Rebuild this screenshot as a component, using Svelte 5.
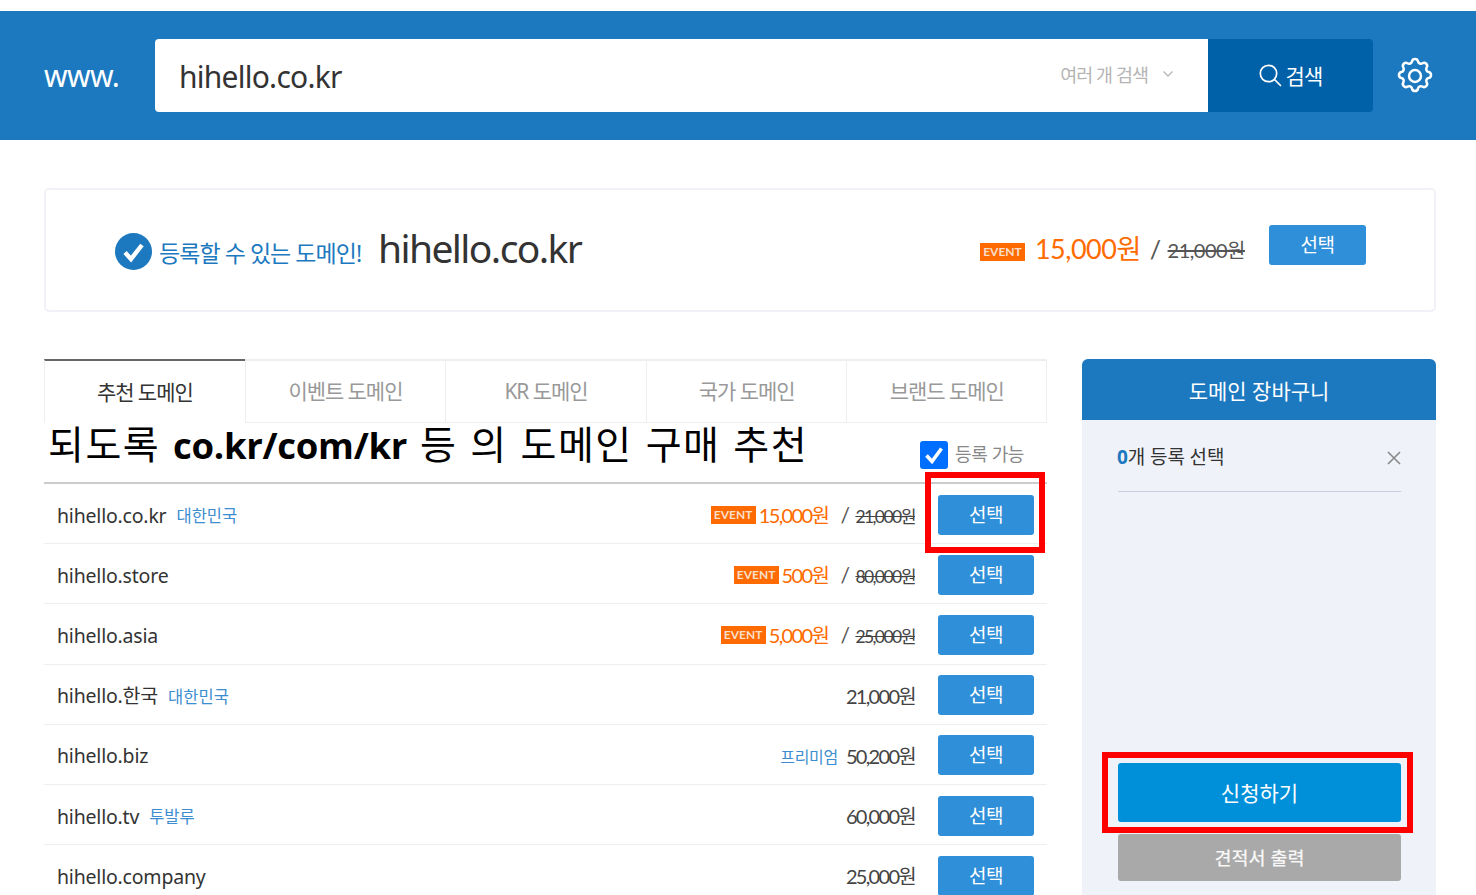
<script>
  const tabs = ['추천 도메인', '이벤트 도메인', 'KR 도메인', '국가 도메인', '브랜드 도메인'];
  const rows = [
    { name: 'hihello.co.kr', tag: '대한민국', event: true, price: '15,000원', old: '21,000원' },
    { name: 'hihello.store', event: true, price: '500원', old: '80,000원' },
    { name: 'hihello.asia', event: true, price: '5,000원', old: '25,000원' },
    { name: 'hihello.한국', tag: '대한민국', plain: '21,000원' },
    { name: 'hihello.biz', note: '프리미엄', plain: '50,200원' },
    { name: 'hihello.tv', tag: '투발루', plain: '60,000원' },
    { name: 'hihello.company', plain: '25,000원' }
  ];
</script>

<div class="page">
  <header class="top">
    <span class="www">www.</span>
    <div class="search">
      <span class="query">hihello.co.kr</span>
      <span class="multi">여러 개 검색
        <svg width="12" height="8" viewBox="0 0 12 8" fill="none" stroke="#b5b5b5" stroke-width="1.3"><path d="M1.5 1.5 6 6l4.5-4.5"/></svg>
      </span>
    </div>
    <button class="go">
      <svg width="24" height="24" viewBox="0 0 24 24" fill="none" stroke="#fff" stroke-width="1.7"><circle cx="10.5" cy="10.5" r="8.2"/><path d="m16.5 16.5 6 6" stroke-linecap="round"/></svg>
      검색
    </button>
    <svg class="gear" width="42" height="42" viewBox="0 0 24 24" fill="none" stroke="#fff" stroke-width="1.45" stroke-linecap="round" stroke-linejoin="round"><circle cx="12" cy="12" r="3.4"/><path d="M10.3 3.6c.4-1.8 3-1.8 3.4 0a1.7 1.7 0 0 0 2.6 1.1c1.5-.9 3.3.9 2.4 2.4a1.7 1.7 0 0 0 1.1 2.6c1.8.4 1.8 3 0 3.4a1.7 1.7 0 0 0-1.1 2.6c.9 1.5-.9 3.3-2.4 2.4a1.7 1.7 0 0 0-2.6 1.1c-.4 1.8-3 1.8-3.4 0a1.7 1.7 0 0 0-2.6-1.1c-1.5.9-3.3-.9-2.4-2.4a1.7 1.7 0 0 0-1.1-2.6c-1.8-.4-1.8-3 0-3.4a1.7 1.7 0 0 0 1.1-2.6c-.9-1.5.9-3.3 2.4-2.4a1.7 1.7 0 0 0 2.6-1.1Z"/></svg>
  </header>

  <section class="result">
    <div class="avail">
      <svg width="37" height="37" viewBox="0 0 37 37"><circle cx="18.5" cy="18.5" r="18.5" fill="#1c79bf"/><path d="M10 19.5l6 6.5 11-14" fill="none" stroke="#fff" stroke-width="4.4"/></svg>
      <span class="avail-text">등록할 수 있는 도메인!</span>
      <span class="avail-name">hihello.co.kr</span>
    </div>
    <div class="offer">
      <span class="event big">EVENT</span>
      <span class="offer-price">15,000원</span>
      <span class="offer-slash">/</span>
      <s class="offer-old">21,000원</s>
      <button class="pick offer-pick">선택</button>
    </div>
  </section>

  <div class="columns">
    <main class="list-col">
      <nav class="tabs">
        {#each tabs as t, i}
          <div class="tab" class:active={i === 0}>{t}</div>
        {/each}
      </nav>
      <div class="bar">
        <h2>되도록 <b>co.kr/com/kr</b> 등 의 도메인 구매 추천</h2>
        <label class="only">
          <span class="box"><svg width="28" height="28" viewBox="0 0 28 28"><path d="M6.5 14.5l5.5 6 9.5-13" fill="none" stroke="#fff" stroke-width="3.6"/></svg></span>
          <span class="only-text">등록 가능</span>
        </label>
      </div>
      <div class="list">
        {#each rows as r}
          <div class="row">
            <span class="name">{r.name}</span>
            {#if r.tag}<span class="tag">{r.tag}</span>{/if}
            <span class="spacer"></span>
            {#if r.event}
              <span class="event">EVENT</span>
              <span class="price">{r.price}</span>
              <span class="slash">/</span>
              <s class="old">{r.old}</s>
            {:else}
              {#if r.note}<span class="note">{r.note}</span>{/if}
              <span class="plain">{r.plain}</span>
            {/if}
            <button class="pick">선택</button>
          </div>
        {/each}
      </div>
    </main>

    <aside class="cart">
      <div class="cart-head">도메인 장바구니</div>
      <div class="cart-body">
        <div class="cart-count">
          <span><b>0</b>개 등록 선택</span>
          <svg width="14" height="14" viewBox="0 0 14 14" stroke="#8c8c8c" stroke-width="1.7"><path d="M1 1l12 12M13 1 1 13"/></svg>
        </div>
        <button class="apply">신청하기</button>
        <button class="quote">견적서 출력</button>
      </div>
    </aside>
  </div>

  <div class="mark mark-a"></div>
  <div class="mark mark-b"></div>
</div>

<style>
  :global(body) { margin: 0; background: #fff; }
  .page {
    position: relative;
    height: 895px;
    overflow: hidden;
    padding-top: 11px;
    box-sizing: border-box;
    font-family: "Noto Sans", "Noto Sans CJK KR", sans-serif;
    color: #333;
    letter-spacing: -0.5px;
  }
  button { font-family: inherit; border: 0; padding: 0; letter-spacing: inherit; }

  .top {
    height: 129px;
    background: #1c79bf;
    display: flex;
    align-items: center;
    padding: 0 0 0 44px;
    box-sizing: border-box;
  }
  .www { width: 111px; color: #fff; font-size: 30px; letter-spacing: -0.6px; }
  .search {
    width: 1053px;
    height: 73px;
    background: #fff;
    border-radius: 4px 0 0 4px;
    display: flex;
    align-items: center;
    justify-content: space-between;
    padding: 0 34px 0 24px;
    box-sizing: border-box;
  }
  .query { font-size: 30px; color: #333; letter-spacing: -0.75px; margin-top: 2px; }
  .multi { font-size: 18.5px; color: #b5b5b5; display: flex; align-items: center; gap: 14px; letter-spacing: -1px; margin-top: -4px; }
  .go {
    width: 165px;
    height: 73px;
    background: #0060a8;
    color: #fff;
    border-radius: 0 4px 4px 0;
    font-size: 21px;
    display: flex;
    align-items: center;
    justify-content: center;
    gap: 3px;
    padding-bottom: 2px;
    letter-spacing: -0.8px;
  }
  .gear { margin-left: 21px; margin-top: 1px; }

  .result {
    margin: 48px 40px 0 44px;
    height: 124px;
    border: 2px solid #f0f2f8;
    border-radius: 5px;
    box-sizing: border-box;
    display: flex;
    align-items: center;
    justify-content: space-between;
    padding: 0 68px 0 69px;
  }
  .avail { display: flex; align-items: center; margin-top: 3px; }
  .avail-text { color: #1c79bf; font-size: 23px; margin-left: 7px; letter-spacing: -0.95px; width: 220px; white-space: nowrap; }
  .avail-name { color: #333; font-size: 39px; letter-spacing: -1.6px; margin-top: -8px; margin-left: -1px; }
  .offer { display: flex; align-items: center; margin-top: -11px; }
  .event {
    background: #ff6b00;
    color: #f8dfcb;
    font-family: "Lato", sans-serif;
    font-size: 12px;
    font-weight: 700;
    width: 45px;
    height: 18px;
    line-height: 18px;
    text-align: center;
    letter-spacing: 0;
    flex: none;
  }
  .event.big { margin-top: 14px; }
  .offer-price { color: #ff6b00; font-family: "Lato", "Noto Sans CJK KR", sans-serif; font-size: 27px; margin-left: 10px; letter-spacing: -0.5px; margin-top: 6px; }
  .offer-slash { font-family: "Lato", sans-serif; font-size: 25px; color: #555; margin-left: 9px; margin-top: 8px; }
  .offer-old { font-family: "Lato", "Noto Sans CJK KR", sans-serif; font-size: 20px; color: #555; margin-left: 7px; margin-right: 24px; letter-spacing: -0.5px; margin-top: 10px; }

  .pick {
    width: 96px;
    height: 40px;
    background: #2f8fd8;
    color: #fff;
    border-radius: 3px;
    font-size: 19px;
    letter-spacing: -0.5px;
    padding-bottom: 2px;
    margin-top: 2px;
    flex: none;
  }
  .offer-pick { width: 97px; margin-top: 0; }

  .columns { display: flex; margin: 47px 40px 0 44px; align-items: flex-start; gap: 35px; }
  .list-col { width: 1003px; }
  .tabs { display: grid; grid-template-columns: repeat(5, 1fr); height: 64px; }
  .tab {
    border-top: 2px solid #eee;
    border-left: 1px solid #eee;
    border-bottom: 1px solid #eee;
    box-sizing: border-box;
    display: flex;
    align-items: center;
    justify-content: center;
    color: #999;
    font-size: 21px;
    letter-spacing: -1.05px;
    padding-bottom: 3px;
  }
  .tab:last-child { border-right: 1px solid #eee; }
  .tab.active {
    color: #333;
    border-top: 2px solid #666;
    border-bottom: 0;
  }
  .bar {
    height: 59px;
    display: flex;
    align-items: flex-start;
    justify-content: space-between;
    padding: 0 23px 0 4px;
    border-bottom: 2px solid #ccc;
  }
  h2 {
    margin: -4px 0 0;
    font-family: "Open Sans", "Noto Sans CJK KR", sans-serif;
    font-size: 39px;
    line-height: 50px;
    font-weight: 400;
    color: #000;
    letter-spacing: 1.5px;
    word-spacing: 1.3px;
    white-space: nowrap;
  }
  h2 b { font-size: 36.5px; font-weight: 700; letter-spacing: -0.3px; }
  .only { display: flex; align-items: center; gap: 7px; color: #888; font-size: 18px; letter-spacing: -0.4px; margin-top: 18px; }
  .only-text { margin-top: -4px; }
  .box { width: 28px; height: 28px; background: #006eff; border-radius: 3px; display: block; }
  .box svg { display: block; }

  .row {
    height: 60.2px;
    box-sizing: border-box;
    border-bottom: 1px solid #eee;
    display: flex;
    align-items: center;
    padding: 0 13px 0 13px;
  }
  .name { font-size: 19.5px; line-height: 26px; color: #333; letter-spacing: -0.2px; margin-top: 4px; white-space: nowrap; }
  .tag { font-size: 16.5px; line-height: 22px; color: #3d8ed0; margin-left: 10px; letter-spacing: 0; margin-top: 5px; }
  .spacer { flex: 1; }
  .row .event { margin-top: 2px; }
  .price { font-family: "Lato", "Noto Sans CJK KR", sans-serif; color: #ff6b00; font-size: 20px; margin-left: 3px; letter-spacing: -1.6px; margin-top: 2px; }
  .slash { font-family: "Lato", sans-serif; font-size: 21px; color: #555; margin-left: 12px; margin-top: 2px; }
  .old { font-family: "Lato", "Noto Sans CJK KR", sans-serif; font-size: 17.5px; color: #444; margin-left: 6px; margin-right: 23px; letter-spacing: -1.6px; margin-top: 4px; }
  .plain { font-family: "Lato", "Noto Sans CJK KR", sans-serif; font-size: 20px; color: #444; margin-right: 23px; letter-spacing: -1.7px; margin-top: 2px; }
  .note { font-size: 16px; color: #3d8ed0; margin-right: 8px; letter-spacing: -0.3px; margin-top: 4px; }

  .cart { width: 354px; height: 600px; background: #eff2f8; border-radius: 6px 6px 0 0; overflow: hidden; flex: none; }
  .cart-head {
    height: 61px;
    background: #1c79bf;
    color: #fff;
    font-size: 21px;
    display: flex;
    align-items: center;
    justify-content: center;
    letter-spacing: 0;
    box-sizing: border-box;
  }
  .cart-body { padding: 0 35px 0 36px; }
  .cart-count {
    height: 72px;
    border-bottom: 1px solid #ccd;
    display: flex;
    align-items: center;
    justify-content: space-between;
    font-size: 19px;
    letter-spacing: -0.1px;
    color: #333;
    box-sizing: border-box;
  }
  .cart-count svg { margin-right: 0; margin-top: 5px; }
  .cart-count span { margin-left: -1px; }
  .cart-count b { color: #1c79bf; }
  .apply {
    display: block;
    width: 283px;
    height: 59px;
    margin-top: 271px;
    padding-bottom: 2px;
    background: #0090da;
    color: #fff;
    font-size: 21px;
    border-radius: 3px;
    letter-spacing: 0;
  }
  .quote {
    display: block;
    width: 283px;
    height: 47px;
    margin-top: 12px;
    padding-bottom: 2px;
    background: #a9a9a9;
    color: #f6f6f6;
    font-size: 18.5px;
    font-weight: 500;
    border-radius: 3px;
    letter-spacing: 0;
  }

  .mark { position: absolute; border: 6px solid #f00; box-sizing: border-box; pointer-events: none; }
  .mark-a { left: 925px; top: 472px; width: 120px; height: 81px; }
  .mark-b { left: 1102px; top: 752px; width: 311px; height: 81px; }
</style>
